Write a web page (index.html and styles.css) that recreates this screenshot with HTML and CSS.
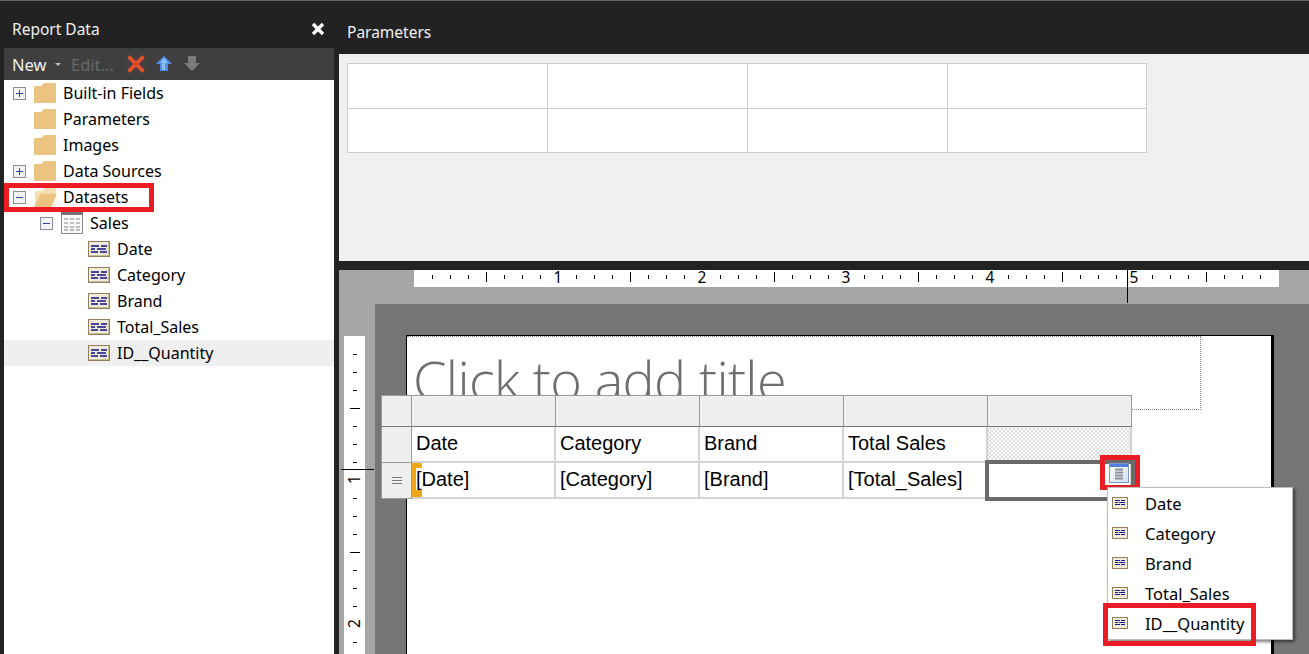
FILE: index.html
```html
<!DOCTYPE html>
<html>

<head>
    <title>Report Data</title>
    <link rel="stylesheet" href="styles.css">
</head>

<body>
    <svg class="defs" width="0" height="0">
        <symbol id="folder" viewBox="0 0 24 20">
            <path d="M1 4 V19 Q1 20 2 20 H22 Q23 20 23 19 V1 Q23 0 22 0 H11 L8 3 H2 Q1 3 1 4 Z" fill="#ecc482" />
        </symbol>
        <symbol id="folderopen" viewBox="0 0 24 20">
            <path d="M2 19 V5 Q2 4 3 4 H9 L12 1 H22 Q23 1 23 2 V7 H7 Z" fill="#f3dcae" />
            <path d="M7 7 H24 L19 19 Q19 20 18 20 H1 Z" fill="#ecc482" />
        </symbol>
        <symbol id="field" viewBox="0 0 22 16">
            <rect x="0.5" y="0.5" width="21" height="15" fill="#f1ead6" stroke="#8f7f60" />
            <path d="M1.5 14.5 H20.5 V1.5" fill="none" stroke="#c9bb98" />
            <path d="M3 5 H11 M13 5 H19 M3 8 H7 M9 8 H18 M3 11 H10 M12 11 H19" stroke="#45459f" stroke-width="2" fill="none" />
        </symbol>
        <symbol id="menufield" viewBox="0 0 16 12">
            <rect x="0.5" y="0.5" width="15" height="11" fill="#f1ead6" stroke="#8f7f60" />
            <path d="M3 3.5 H8 M9 3.5 H13 M3 5.5 H6 M7 5.5 H13 M3 7.5 H8 M9 7.5 H13" stroke="#1a1a9a" fill="none" />
        </symbol>
    </svg>

    <div class="left">
        <div class="panelhead">
            <span>Report Data</span>
            <svg class="close" width="14" height="14" viewBox="0 0 14 14">
                <path d="M2 2 L12 12 M12 2 L2 12" stroke="#fff" stroke-width="3.4" fill="none" />
            </svg>
        </div>
        <div class="toolbar">
            <span class="new">New</span>
            <span class="caret"></span>
            <span class="edit">Edit...</span>
            <svg class="del" width="20" height="20" viewBox="0 0 20 20">
                <path d="M2.5 2.5 L17.5 17.5 M17.5 2.5 L2.5 17.5" stroke="#e0502b" stroke-width="4" fill="none" />
            </svg>
            <svg class="up" width="16" height="16" viewBox="0 0 16 16">
                <path d="M8 0 L16 8 H12 V15 H4 V8 H0 Z" fill="#4c8df0" />
                <path d="M8 2 L12 7 H9 V14 H6 V7 H4 Z" fill="#8fbcf7" />
            </svg>
            <svg class="down" width="16" height="16" viewBox="0 0 16 16">
                <path d="M4 0 H12 V7 H16 L8 15 L0 7 H4 Z" fill="#7c7c7c" />
            </svg>
        </div>
        <div class="tree">
            <div class="row lvl1"><span class="exp plus"></span><svg class="folder"><use href="#folder" /></svg>Built-in Fields</div>
            <div class="row lvl1"><span class="exp none"></span><svg class="folder"><use href="#folder" /></svg>Parameters</div>
            <div class="row lvl1"><span class="exp none"></span><svg class="folder"><use href="#folder" /></svg>Images</div>
            <div class="row lvl1"><span class="exp plus"></span><svg class="folder"><use href="#folder" /></svg>Data Sources</div>
            <div class="row lvl1"><span class="exp"></span><svg class="folder"><use href="#folderopen" /></svg>Datasets</div>
            <div class="row lvl2">
                <span class="exp"></span>
                <svg class="tableicon" width="22" height="22" viewBox="0 0 22 22">
                    <rect x="0.5" y="0.5" width="21" height="21" fill="#fafafa" stroke="#8a8a8a" />
                    <rect x="0" y="0" width="22" height="3" fill="#777" />
                    <path d="M3 7 H7 M9 7 H13 M15 7 H19 M3 11 H7 M9 11 H13 M15 11 H19 M3 15 H7 M9 15 H13 M15 15 H19 M3 18 H7 M9 18 H13 M15 18 H19" stroke="#bdbdbd" stroke-width="2" fill="none" />
                </svg>
                Sales
            </div>
            <div class="row lvl3"><svg class="field"><use href="#field" /></svg>Date</div>
            <div class="row lvl3"><svg class="field"><use href="#field" /></svg>Category</div>
            <div class="row lvl3"><svg class="field"><use href="#field" /></svg>Brand</div>
            <div class="row lvl3"><svg class="field"><use href="#field" /></svg>Total_Sales</div>
            <div class="row lvl3 hover"><svg class="field"><use href="#field" /></svg>ID__Quantity</div>
            <div class="redbox red-datasets"></div>
        </div>
    </div>

    <div class="right">
        <div class="righthead">Parameters</div>
        <div class="params">
            <div class="paramgrid">
                <div></div><div></div><div></div><div></div>
                <div></div><div></div><div></div><div></div>
            </div>
        </div>
        <div class="divider"></div>

        <div class="design">
            <div class="hruler">
                <span>1</span><span>2</span><span>3</span><span>4</span><span>5</span>
            </div>
            <div class="guide guide-v"></div>
            <div class="guide guide-h"></div>
            <div class="designbody">
                <div class="vruler">
                    <span>1</span><span>2</span>
                </div>
                <div class="surface">
                    <div class="page">
                        <div class="titlebox">Click to add title</div>

                        <div class="tablix">
                            <div class="corner"></div>
                            <div class="colhead"></div>
                            <div class="colhead"></div>
                            <div class="colhead"></div>
                            <div class="colhead"></div>
                            <div class="colhead"></div>

                            <div class="rowhead"></div>
                            <div class="cell">Date</div>
                            <div class="cell">Category</div>
                            <div class="cell">Brand</div>
                            <div class="cell">Total Sales</div>
                            <div class="cell dotted"></div>

                            <div class="rowhead lines"><i></i></div>
                            <div class="cell marker"><span>[Date]</span></div>
                            <div class="cell">[Category]</div>
                            <div class="cell">[Brand]</div>
                            <div class="cell">[Total_Sales]</div>
                            <div class="cell blank"></div>
                        </div>

                        <div class="selected"></div>
                        <svg class="picker" width="20" height="20" viewBox="0 0 20 20">
                            <defs>
                                <linearGradient id="pickerbg" x1="0" y1="0" x2="1" y2="1">
                                    <stop offset="0" stop-color="#ffffff" />
                                    <stop offset="1" stop-color="#d5ddf0" />
                                </linearGradient>
                            </defs>
                            <rect x="0.5" y="0.5" width="19" height="19" fill="url(#pickerbg)" stroke="#7f97c4" />
                            <rect x="1" y="1" width="18" height="3" fill="#4f7fe0" />
                            <path d="M6 6.5 H14 M6 9.5 H14 M6 12.5 H14 M6 15.5 H14" stroke="#8b8f98" stroke-width="2" fill="none" />
                        </svg>
                        <div class="redbox red-picker"></div>

                        <div class="menu">
                            <div class="menuitem"><svg class="mfield"><use href="#menufield" /></svg>Date</div>
                            <div class="menuitem"><svg class="mfield"><use href="#menufield" /></svg>Category</div>
                            <div class="menuitem"><svg class="mfield"><use href="#menufield" /></svg>Brand</div>
                            <div class="menuitem"><svg class="mfield"><use href="#menufield" /></svg>Total_Sales</div>
                            <div class="menuitem"><svg class="mfield"><use href="#menufield" /></svg>ID__Quantity</div>
                        </div>
                        <div class="redbox red-menu"></div>
                    </div>
                </div>
            </div>
        </div>
    </div>
</body>

</html>
```

FILE: styles.css
```css
* {
    box-sizing: border-box;
}

html,
body {
    margin: 0;
    height: 654px;
    overflow: hidden;
}

body {
    display: flex;
    background-color: #222222;
    border-top: 1px solid #666666;
    font-family: "Noto Sans", sans-serif;
    font-size: 16px;
    color: #000;
}

.defs {
    position: absolute;
}

/* left panel */
.left {
    width: 339px;
    flex: none;
    padding: 0 5px 0 4px;
}

.panelhead {
    height: 47px;
    display: flex;
    align-items: center;
    justify-content: space-between;
    padding: 9px 9px 0 8px;
    color: #f1f1f1;
    font-size: 15.5px;
}

.toolbar {
    height: 32px;
    background-color: #3f3f3f;
    display: flex;
    align-items: center;
    color: #f1f1f1;
    padding-left: 8px;
    font-size: 16.5px;
}

.new {
    width: 41px;
}

.caret {
    width: 0;
    height: 0;
    border: 3px solid transparent;
    border-top-color: #bbbbbb;
    margin: 3px 0 0 2px;
}

.edit {
    color: #6a6a6a;
    margin-left: 10px;
    width: 54px;
}

.del {
    margin-left: 1px;
}

.up {
    margin-left: 10px;
}

.down {
    margin-left: 12px;
}

.tree {
    background-color: #fff;
    height: 574px;
    position: relative;
}

.row {
    height: 26px;
    display: flex;
    align-items: center;
}

.lvl1 {
    padding-left: 9px;
}

.lvl2 {
    padding-left: 36px;
}

.lvl3 {
    padding-left: 84px;
}

.hover {
    background-color: #efefef;
}

.exp {
    width: 13px;
    height: 13px;
    flex: none;
    border: 1px solid #8d8d99;
    background-color: #f3f3f6;
    background-image: linear-gradient(#33469a, #33469a);
    background-size: 7px 1px;
    background-position: center;
    background-repeat: no-repeat;
}

.plus {
    background-image: linear-gradient(#33469a, #33469a), linear-gradient(#33469a, #33469a);
    background-size: 7px 1px, 1px 7px;
}

.none {
    visibility: hidden;
}

.folder {
    width: 24px;
    height: 20px;
    margin: 0 6px 0 7px;
    flex: none;
}

.tableicon {
    margin: 0 7px 0 8px;
    flex: none;
}

.field {
    width: 22px;
    height: 16px;
    margin-right: 7px;
    flex: none;
}

/* the red marks drawn on top of the screenshot */
.redbox {
    position: absolute;
    border: 5px solid #ed1c24;
}

.red-datasets {
    left: 0;
    top: 103px;
    width: 150px;
    height: 29px;
}

/* right side */
.right {
    flex: 1;
    min-width: 0;
}

.righthead {
    height: 53px;
    padding-top: 21px;
    padding-left: 8px;
    color: #f1f1f1;
    font-size: 15.5px;
    line-height: 21px;
}

.params {
    height: 207px;
    background-color: #f0f0f0;
    padding: 9px 0 0 8px;
}

.paramgrid {
    width: 800px;
    display: grid;
    grid-template-columns: 200px 200px 200px 199px;
    grid-template-rows: 45px 44px;
    border-top: 1px solid #cccccc;
    border-left: 1px solid #cccccc;
}

.paramgrid div {
    background-color: #fff;
    border-right: 1px solid #cccccc;
    border-bottom: 1px solid #cccccc;
}

.divider {
    height: 9px;
    background-color: #222222;
}

.design {
    height: 384px;
    background-color: #a5a5a5;
    position: relative;
}

.hruler {
    width: 865px;
    height: 17px;
    margin-left: 75px;
    padding-left: 72px;
    display: flex;
    background-color: #fff;
    background-image:
        linear-gradient(90deg, #fff 12px, transparent 12px),
        linear-gradient(90deg, #000 1px, transparent 1px),
        linear-gradient(90deg, #000 1px, transparent 1px);
    background-size: 144px 17px, 18px 4px, 144px 10px;
    background-position: 138px 0, 0 5px, 72px 2px;
    background-repeat: repeat-x;
    font-size: 15.5px;
    line-height: 15px;
}

.hruler span {
    width: 144px;
    height: 15px;
    text-align: center;
}

.guide {
    position: absolute;
    background-color: #000;
    z-index: 2;
}

.guide-v {
    left: 788px;
    top: 0;
    width: 1px;
    height: 33px;
}

.guide-h {
    left: 2px;
    top: 199px;
    width: 33px;
    height: 1px;
}

.designbody {
    display: flex;
    margin-top: 17px;
    height: 350px;
}

.vruler {
    width: 21px;
    margin: 32px 0 0 5px;
    flex: none;
    padding-top: 132px;
    display: flex;
    flex-direction: column;
    gap: 120px;
    background-color: #fff;
    background-image:
        linear-gradient(#fff 12px, transparent 12px),
        linear-gradient(#000 1px, transparent 1px),
        linear-gradient(#000 1px, transparent 1px);
    background-size: 21px 144px, 4px 18px, 10px 144px;
    background-position: 0 138px, 9px 0, 6px 72px;
    background-repeat: repeat-y;
    font-size: 15.5px;
}

.vruler span {
    display: flex;
    align-items: center;
    justify-content: center;
    height: 24px;
    writing-mode: vertical-rl;
    transform: rotate(180deg);
    line-height: 21px;
}

.surface {
    flex: 1;
    margin-left: 10px;
    padding: 31px 0 0 31px;
    background-color: #767676;
}

.page {
    width: 868px;
    height: 319px;
    background-color: #fff;
    border-top: 1px solid #000;
    border-left: 1px solid #000;
    border-right: 3px solid #000;
    position: relative;
}

.titlebox {
    width: 794px;
    height: 74px;
    border: 1px dotted #888888;
    border-left: none;
    padding: 12px 0 0 6px;
    font-family: "Open Sans", sans-serif;
    font-weight: 300;
    font-size: 54px;
    letter-spacing: -0.65px;
    line-height: 60px;
    color: #6e6e6e;
    white-space: nowrap;
}

.tablix {
    position: absolute;
    left: -26px;
    top: 59px;
    display: grid;
    grid-template-columns: 31px repeat(5, 144px);
    grid-template-rows: 32px 36px 36px;
    font-family: "Liberation Sans", sans-serif;
    font-size: 20px;
}

.corner,
.colhead,
.rowhead {
    background-color: #efefef;
    border: 1px solid #9a9a9a;
    border-left-width: 0;
    border-bottom-color: #777777;
}

.corner,
.rowhead {
    border-left-width: 1px;
}

.rowhead {
    border-top-width: 0;
    border-bottom-color: #9a9a9a;
}

.lines {
    display: flex;
    align-items: center;
    justify-content: center;
}

.lines i {
    width: 10px;
    height: 7px;
    border-top: 1px solid #777777;
    border-bottom: 1px solid #777777;
    background: linear-gradient(#777777, #777777) center / 10px 1px no-repeat;
}

.cell {
    background-color: #fff;
    border-right: 2px solid #d3d3d3;
    border-bottom: 2px solid #d3d3d3;
    padding: 0 0 2px 4px;
    display: flex;
    align-items: center;
}

.marker {
    background: linear-gradient(#eda614, #eda614) left / 10px 100% no-repeat #fff;
}

.marker span {
    background-color: #fff;
    line-height: 22px;
}

.dotted {
    background-color: #fdfdfd;
    background-image: radial-gradient(circle, #dcdcdc 0.7px, transparent 0.9px), radial-gradient(circle, #dcdcdc 0.7px, transparent 0.9px);
    background-size: 4px 4px;
    background-position: 0 0, 2px 2px;
}

.selected {
    position: absolute;
    left: 578px;
    top: 124px;
    width: 150px;
    height: 41px;
    border: 4px solid #6a6a6a;
}

.picker {
    position: absolute;
    left: 702px;
    top: 127px;
}

.red-picker {
    left: 693px;
    top: 119px;
    width: 40px;
    height: 35px;
}

.menu {
    position: absolute;
    left: 700px;
    top: 151px;
    width: 186px;
    height: 153px;
    background-color: #fff;
    border: 1px solid #bdbdbd;
    box-shadow: 2px 2px 3px rgba(0, 0, 0, 0.5);
    font-size: 16.5px;
}

.menuitem {
    height: 30px;
    display: flex;
    align-items: center;
    white-space: nowrap;
}

.mfield {
    width: 16px;
    height: 12px;
    margin: -1px 17px 0 4px;
    flex: none;
}

.red-menu {
    left: 696px;
    top: 267px;
    width: 153px;
    height: 43px;
}
```
